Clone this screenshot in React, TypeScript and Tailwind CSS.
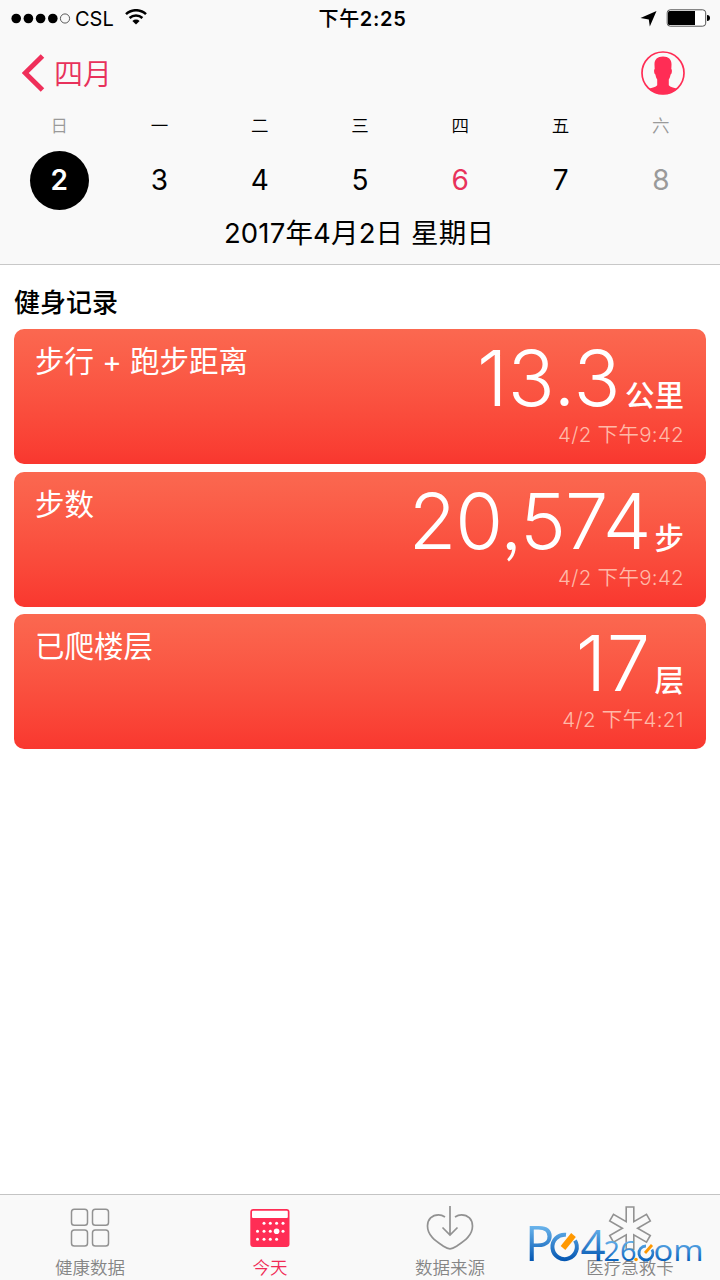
import type { ReactNode } from "react";

const days = [
  { name: "日", num: "2", nameColor: "text-[#9a9a9a]", numColor: "text-white" },
  { name: "一", num: "3", nameColor: "text-black", numColor: "text-black" },
  { name: "二", num: "4", nameColor: "text-black", numColor: "text-black" },
  { name: "三", num: "5", nameColor: "text-black", numColor: "text-black" },
  { name: "四", num: "6", nameColor: "text-black", numColor: "text-[#e8315b]" },
  { name: "五", num: "7", nameColor: "text-black", numColor: "text-black" },
  { name: "六", num: "8", nameColor: "text-[#9a9a9a]", numColor: "text-[#9a9a9a]" },
];

const records = [
  { title: "步行 + 跑步距离", value: "13.3", unit: "公里", time: "4/2 下午9:42", tracking: "tracking-[0.4px]" },
  { title: "步数", value: "20,574", unit: "步", time: "4/2 下午9:42", tracking: "tracking-[-1px]" },
  { title: "已爬楼层", value: "17", unit: "层", time: "4/2 下午4:21", tracking: "tracking-[0.4px]" },
];

function StatusBar() {
  return (
    <div className="grid h-[37px] grid-cols-3 items-center pr-[10px] pl-[11px]">
      <div className="flex items-center">
        <svg width="60" height="12" viewBox="0 0 60 12">
          {[5.2, 17.4, 29.6, 41.8].map((x) => (
            <circle key={x} cx={x} cy="5.5" r="4.8" />
          ))}
          <circle cx="54" cy="5.5" r="4.6" fill="none" stroke="#333" strokeWidth="0.8" />
        </svg>
        <span className="ml-[4px] text-[20px]">CSL</span>
        <svg className="-mt-[3px] ml-[11px]" width="22" height="16" viewBox="0 0 22 16" fill="none" stroke="#000" strokeWidth="2.5">
          <path d="M1 5.2a14.5 14.5 0 0 1 20 0" />
          <path d="M4.6 9a9.3 9.3 0 0 1 12.8 0" />
          <path d="M11 15.6 7.4 12a5.2 5.2 0 0 1 7.2 0z" fill="#000" stroke="none" />
        </svg>
      </div>
      <div className="pl-[4px] text-center text-[20px] font-semibold tracking-[0.7px]">
        <span className="font-medium">下午</span>2:25
      </div>
      <div className="flex items-center justify-end gap-[9px]">
        <svg width="17" height="16" viewBox="0 0 17 16">
          <path d="M16.5 0 9.8 15.5 8.8 8.6 0.5 7z" />
        </svg>
        <svg className="-mt-[2px]" width="44" height="18" viewBox="0 0 44 18">
          <rect x="1.2" y="0.8" width="38.5" height="16.4" rx="3" fill="#fff" stroke="#555" />
          <path d="M3.5 2h25.5v14H3.5A1.5 1.5 0 0 1 2 14.5v-11A1.5 1.5 0 0 1 3.5 2z" />
          <path d="M41 6a3 3 0 0 1 0 6z" />
        </svg>
      </div>
    </div>
  );
}

function Avatar() {
  return (
    <svg width="44" height="44" viewBox="0 0 44 44">
      <circle cx="22" cy="22" r="21" fill="none" stroke="#ff2d55" strokeWidth="1.7" />
      <path
        d="M22 5.5c5.8 0 8.8 3.2 8.5 8.500l-.2 4c1 .4.8 4.800-.7 5.600-.4 2.200-1 3.800-1.800 5v5.600c1.500 1.800 4.500 2.300 8.600 3.600A21.500 21.500 0 0 1 7.600 37.800C11.700 36.500 14.700 36 16.200 34.200v-5.600c-.8-1.200-1.400-2.800-1.800-5-1.500-.8-1.700-5.200-.7-5.600l-.2-4C13.200 8.700 16.200 5.500 22 5.500z"
        fill="#ff2d55"
      />
    </svg>
  );
}

function GridIcon() {
  return (
    <svg width="40" height="40" viewBox="0 0 40 40" fill="none" stroke="#929292" strokeWidth="1.5">
      {[1.5, 22.5].map((x) =>
        [1.2, 22].map((y) => <rect key={`${x}-${y}`} x={x} y={y} width="16" height="16" rx="2.8" />),
      )}
    </svg>
  );
}

function CalendarIcon() {
  const dots = [
    [14, 15.3], [20.3, 15.3], [26.6, 15.3], [33, 15.3],
    [7.5, 23.3], [14, 23.3], [20.3, 23.3], [33, 23.3],
    [7.5, 31.3], [14, 31.3], [20.3, 31.3], [26.6, 31.3],
  ];
  return (
    <svg width="40" height="40" viewBox="0 0 40 40">
      <rect x="0.3" y="1" width="39.2" height="38" rx="3" fill="#ff2d55" />
      <rect x="2" y="2.8" width="35.8" height="7.2" rx="1" fill="#fff" />
      {dots.map(([x, y]) => (
        <circle key={`${x}-${y}`} cx={x} cy={y} r="1.5" fill="#fff" />
      ))}
      <circle cx="26.6" cy="23.3" r="2.8" fill="#fff" />
    </svg>
  );
}

function HeartIcon() {
  return (
    <svg width="48" height="46" viewBox="0 0 48 46" fill="none" stroke="#929292" strokeWidth="1.7">
      <path d="M24 1v29M16.5 22.5 24 30l7.5-7.5" />
      <path d="M19 12C16.8 10.5 14.5 9.8 12.5 9.8 6 9.8 1.5 14.5 1.5 21c0 10 9 15.5 16 20.2C20 42.8 22 43.8 24 43.8s4-1 6.5-2.600c7-4.700 16-10.200 16-20.200 0-6.500-4.500-11.200-11-11.200-2 0-4.300.7-6.500 2.200" />
    </svg>
  );
}

function StarOfLifeIcon() {
  return (
    <svg width="44" height="44" viewBox="0 0 44 44" fill="none" stroke="#929292" strokeWidth="1.6">
      <path d="M18.2 1h7.6v14.6l12.7-7.3 3.8 6.6L29.6 22.2l12.7 7.3-3.8 6.6-12.7-7.3v14.4h-7.6V28.8L5.5 36.1 1.7 29.5l12.7-7.3L1.7 14.9l3.8-6.6 12.7 7.3z" />
    </svg>
  );
}

function Tab({ icon, label, color }: { icon: ReactNode; label: string; color: string }) {
  return (
    <div className="flex flex-col items-center">
      <div className="flex h-[46px] items-center">{icon}</div>
      <span className={`mt-[5px] text-[17.5px] leading-[24px] font-[350] ${color}`}>{label}</span>
    </div>
  );
}

function Watermark() {
  return (
    <svg className="absolute top-[1220px] left-[526px] overflow-visible" width="180" height="50" viewBox="0 0 180 50">
      <defs>
        <linearGradient id="big" gradientUnits="userSpaceOnUse" x1="0" y1="6" x2="0" y2="42">
          <stop offset="0" stopColor="#6bb5ec" />
          <stop offset="1" stopColor="#0053b0" />
        </linearGradient>
        <linearGradient id="small" gradientUnits="userSpaceOnUse" x1="0" y1="19" x2="0" y2="41">
          <stop offset="0" stopColor="#6bb5ec" />
          <stop offset="1" stopColor="#0a62bd" />
        </linearGradient>
      </defs>
      <g fontFamily="Open Sans, sans-serif" fill="url(#big)">
        <text x="-1" y="41" fontSize="48.5">P</text>
        <text x="54.5" y="41" fontSize="43" textLength="25" lengthAdjust="spacingAndGlyphs">4</text>
      </g>
      <g fontFamily="Open Sans, sans-serif" fill="url(#small)">
        <text x="77.5" y="41" fontSize="28" textLength="33" lengthAdjust="spacingAndGlyphs">26</text>
        <text x="127.5" y="41" fontSize="30" textLength="50" lengthAdjust="spacingAndGlyphs">om</text>
      </g>
      <path d="M40 14.8A12.2 12.2 0 1 0 49 20.5" fill="none" stroke="url(#big)" strokeWidth="4" />
      <path d="M37 28 47.5 15" stroke="#ff9800" strokeWidth="6" />
      <circle cx="110" cy="39.5" r="1.8" fill="#ff9800" />
      <path d="M120 26a7 7 0 1 0 6 3.5" fill="none" stroke="url(#small)" strokeWidth="2.8" />
      <path d="m119 33 7-8" stroke="#ff9800" strokeWidth="2.8" />
    </svg>
  );
}

export default function App() {
  return (
    <div className="relative flex h-[1280px] w-[720px] flex-col overflow-hidden bg-white font-[Inter,'Noto_Sans_CJK_SC',sans-serif] text-black">
      <header className="h-[265px] shrink-0 border-b border-[#c8c8c8] bg-[#f9f9f9]">
        <StatusBar />
        <div className="flex h-[72px] items-center justify-between pr-[35px] pl-[22px]">
          <div className="flex items-center gap-[9px] text-[#e8315b]">
            <svg width="23" height="38" viewBox="0 0 23 38" fill="none" stroke="#ef2f5a" strokeWidth="5">
              <path d="M20.5 2 3.2 19l17.3 17" />
            </svg>
            <span className="pt-[3px] text-[29px] leading-[40px] font-[350]">四月</span>
          </div>
          <Avatar />
        </div>
        <div className="grid grid-cols-7 pr-[9px] pl-[9px]">
          {days.map((d, i) => (
            <div key={d.num} className="flex flex-col items-center">
              <span className={`h-[42px] pt-[4px] text-[17.5px] leading-[26px] font-[350] ${d.nameColor}`}>{d.name}</span>
              <span
                className={`flex size-[59px] items-center justify-center rounded-full pb-[2px] text-[28px] ${d.numColor} ${i === 0 ? "bg-black font-semibold" : ""}`}
              >
                {d.num}
              </span>
            </div>
          ))}
        </div>
        <div className="mt-[3px] pr-[2px] text-center text-[27.5px] leading-[40px] tracking-[0.15px]">2017年4月2日 星期日</div>
      </header>

      <main className="flex-1 px-[14px] pt-[20px]">
        <h2 className="h-[44px] text-[26px] leading-[36px] font-medium">健身记录</h2>
        <div className="flex flex-col gap-[7.5px]">
          {records.map((r) => (
            <section
              key={r.title}
              className="flex h-[135px] justify-between rounded-[10px] bg-linear-to-b from-[#fb6850] to-[#f9372f] pr-[22px] pl-[21px] text-white"
            >
              <h3 className="pt-[12px] text-[29.5px] leading-[40px]">{r.title}</h3>
              <div className="flex flex-col items-end">
                <div className="flex h-[91px] items-baseline gap-[4px]">
                  <span
                    className={`text-[77.5px] leading-[98px] font-light [font-feature-settings:'ss03'] ${r.tracking}`}
                  >
                    {r.value}
                  </span>
                  <span className="text-[29.5px] font-medium">{r.unit}</span>
                </div>
                <div className="text-[20.5px] leading-[30px] font-[350] tracking-[0.3px] text-[#ffb9a8]">{r.time}</div>
              </div>
            </section>
          ))}
        </div>
      </main>

      <nav className="grid h-[86px] shrink-0 grid-cols-4 border-t border-[#c4c4c4] bg-[#f9f9f9] pt-[10px]">
        <Tab icon={<GridIcon />} label="健康数据" color="text-[#858585]" />
        <Tab icon={<CalendarIcon />} label="今天" color="text-[#f02a55]" />
        <Tab icon={<HeartIcon />} label="数据来源" color="text-[#858585]" />
        <Tab icon={<StarOfLifeIcon />} label="医疗急救卡" color="text-[#858585]" />
      </nav>
      <Watermark />
    </div>
  );
}
